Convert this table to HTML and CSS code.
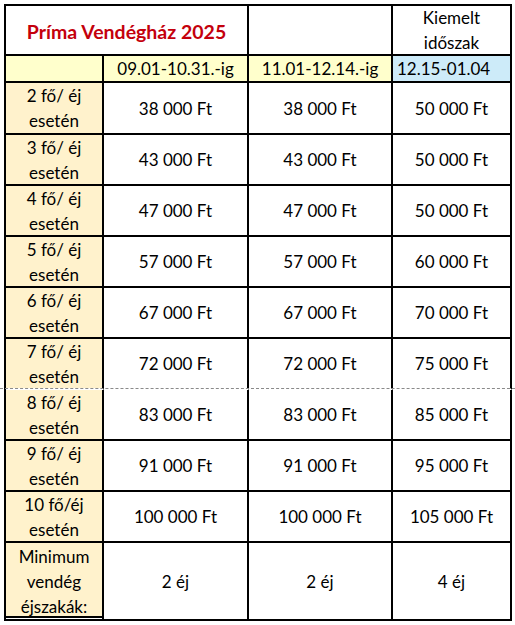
FILE: index.html
```html
<!DOCTYPE html>
<html lang="hu">
<head>
<meta charset="utf-8">
<title>Príma Vendégház 2025</title>
<link rel="stylesheet" href="styles.css">
</head>
<body>
<div class="sheet">
  <div class="c title span2">Príma Vendégház 2025</div>
  <div class="c"></div>
  <div class="c">Kiemelt<br>időszak</div>

  <div class="c yel"></div>
  <div class="c yel">09.01-10.31.-ig</div>
  <div class="c yel">11.01-12.14.-ig</div>
  <div class="c blue left">12.15-01.04</div>

  <div class="c beige">2 fő/ éj<br>esetén</div>
  <div class="c">38 000 Ft</div>
  <div class="c">38 000 Ft</div>
  <div class="c">50 000 Ft</div>

  <div class="c beige">3 fő/ éj<br>esetén</div>
  <div class="c">43 000 Ft</div>
  <div class="c">43 000 Ft</div>
  <div class="c">50 000 Ft</div>

  <div class="c beige">4 fő/ éj<br>esetén</div>
  <div class="c">47 000 Ft</div>
  <div class="c">47 000 Ft</div>
  <div class="c">50 000 Ft</div>

  <div class="c beige">5 fő/ éj<br>esetén</div>
  <div class="c">57 000 Ft</div>
  <div class="c">57 000 Ft</div>
  <div class="c">60 000 Ft</div>

  <div class="c beige">6 fő/ éj<br>esetén</div>
  <div class="c">67 000 Ft</div>
  <div class="c">67 000 Ft</div>
  <div class="c">70 000 Ft</div>

  <div class="c beige pb">7 fő/ éj<br>esetén</div>
  <div class="c pb">72 000 Ft</div>
  <div class="c pb">72 000 Ft</div>
  <div class="c pb">75 000 Ft</div>

  <div class="c beige">8 fő/ éj<br>esetén</div>
  <div class="c">83 000 Ft</div>
  <div class="c">83 000 Ft</div>
  <div class="c">85 000 Ft</div>

  <div class="c beige">9 fő/ éj<br>esetén</div>
  <div class="c">91 000 Ft</div>
  <div class="c">91 000 Ft</div>
  <div class="c">95 000 Ft</div>

  <div class="c beige">10 fő/éj<br>esetén</div>
  <div class="c">100 000 Ft</div>
  <div class="c">100 000 Ft</div>
  <div class="c">105 000 Ft</div>

  <div class="c beige dbl">Minimum<br>vendég<br>éjszakák:</div>
  <div class="c">2 éj</div>
  <div class="c">2 éj</div>
  <div class="c">4 éj</div>
</div>
<div class="pagebreak"></div>
</body>
</html>
```
FILE: styles.css
```css
html, body {
  margin: 0;
  padding: 0;
  background: #fff;
}

body {
  position: relative;
  width: 515px;
  height: 625px;
  overflow: hidden;
  font-family: Lato, "Open Sans", sans-serif;
  font-size: 17px;
  line-height: 25px;
  color: #000;
}

.sheet {
  display: grid;
  grid-template-columns: 98px 145px 144px 119px;
  grid-template-rows: 50px 27px 52px repeat(8, 51px) 78px;
  width: max-content;
  margin: 4px 0 0 4px;
  border-top: 2px solid #000;
  border-left: 2px solid #000;
}

.c {
  display: flex;
  align-items: center;
  justify-content: center;
  text-align: center;
  border-right: 2px solid #000;
  border-bottom: 2px solid #000;
  background: #fff;
  white-space: nowrap;
}

.span2 {
  grid-column: span 2;
}

.title {
  font-size: 19.5px;
  font-weight: 700;
  color: #c4000c;
  padding-top: 2px;
}

.yel {
  background: #ffffcc;
}

.blue {
  background: #cdebf9;
}

.beige {
  background: #fff2cc;
}

.left {
  justify-content: flex-start;
  padding-left: 4px;
}

.pb {
  border-bottom-color: #fff;
}

.dbl {
  box-shadow: inset 0 -1px 0 #fff, inset 0 -3px 0 #000;
}

.pagebreak {
  position: absolute;
  left: 0;
  right: 0;
  top: 388px;
  height: 0;
  border-top: 1px dashed #8a8a8a;
}
```
